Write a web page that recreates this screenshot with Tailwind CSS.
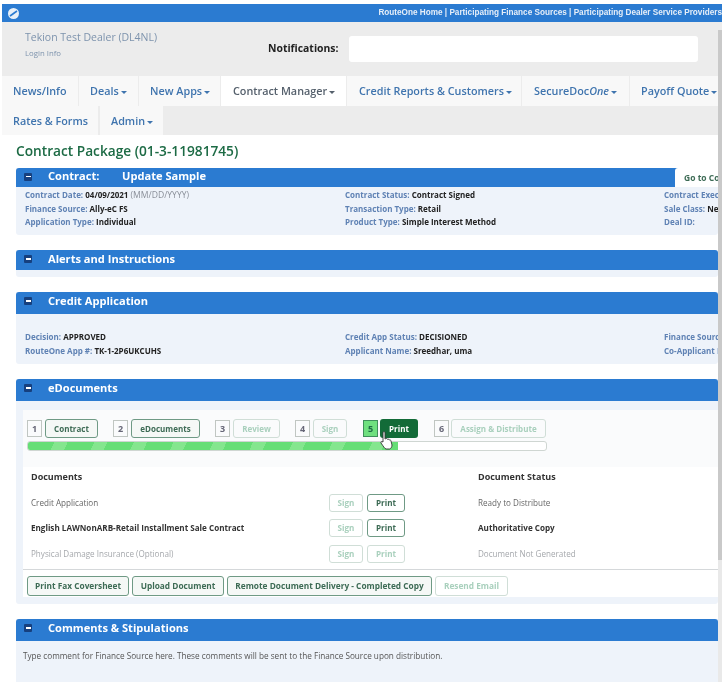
<!DOCTYPE html>
<html lang="en">
<head>
    <meta charset="UTF-8">
    <meta name="viewport" content="width=device-width, initial-scale=1.0">
    <title>RouteOne | Contract Package</title>
    <script src="https://cdn.jsdelivr.net/npm/@tailwindcss/browser@4"></script>
</head>
<body class="bg-white">
<div class="relative w-[722px] h-[682px] overflow-hidden bg-white pt-[4px] pl-[2px] font-['Open_Sans',sans-serif] text-[#333] blur-[0.35px]">

    <!-- top bar -->
    <div class="flex items-center justify-between h-[18px] bg-[#2b7bd1] pl-[6px] w-[720px]">
        <svg class="w-[11px] h-[11px]" viewBox="0 0 11 11"><circle cx="5.5" cy="5.5" r="5.5" fill="#e8f0f8"/><path d="M2 8 L9 3" stroke="#2b7bd1" stroke-width="1.6"/></svg>
        <div class="font-['Liberation_Sans',sans-serif] font-bold text-[8.2px] text-[#e6eef8] whitespace-nowrap">RouteOne Home | Participating Finance Sources | Participating Dealer Service Providers</div>
    </div>

    <!-- dealer header -->
    <div class="bg-[#ececec] h-[113px] w-[720px]">
        <div class="flex h-[54px] pt-[14px]">
            <div class="w-[266px] pl-[23px]">
                <div class="text-[10.5px] leading-[12px] text-[#7d93ad] -mt-[5px]">Tekion Test Dealer (DL4NL)</div>
                <div class="text-[7.8px] leading-[10px] mt-[5px] text-[#7d93ad]">Login Info</div>
            </div>
            <div class="w-[81px] pt-[2px] text-[10.4px] font-bold text-[#222] leading-[20px]">Notifications:</div>
            <div class="w-[349px] h-[26px] bg-white rounded-[3px]"></div>
        </div>
        <div class="flex items-start gap-[1px] text-[10.8px] font-semibold text-[#3f74ae] whitespace-nowrap">
            <div class="w-[76px] h-[30px] bg-[#f8f8f8] pl-[11px] leading-[30px]">News/Info</div>
            <div class="w-[59px] h-[30px] bg-[#f8f8f8] pl-[11px] leading-[30px]">Deals<span class="inline-block align-middle ml-[2px] w-0 h-0 border-x-[3px] border-t-[3px] border-x-transparent border-t-current"></span></div>
            <div class="w-[81px] h-[30px] bg-[#f8f8f8] pl-[11px] leading-[30px]">New Apps<span class="inline-block align-middle ml-[2px] w-0 h-0 border-x-[3px] border-t-[3px] border-x-transparent border-t-current"></span></div>
            <div class="w-[125px] h-[30px] bg-white pl-[12px] leading-[30px] text-[#55606c]">Contract Manager<span class="inline-block align-middle ml-[2px] w-0 h-0 border-x-[3px] border-t-[3px] border-x-transparent border-t-current"></span></div>
            <div class="w-[174px] h-[30px] bg-[#f8f8f8] pl-[12px] leading-[30px]">Credit Reports &amp; Customers<span class="inline-block align-middle ml-[2px] w-0 h-0 border-x-[3px] border-t-[3px] border-x-transparent border-t-current"></span></div>
            <div class="w-[107px] h-[30px] bg-[#f8f8f8] pl-[12px] leading-[30px]">SecureDoc<em>One</em><span class="inline-block align-middle ml-[2px] w-0 h-0 border-x-[3px] border-t-[3px] border-x-transparent border-t-current"></span></div>
            <div class="w-[90px] h-[30px] bg-[#f8f8f8] pl-[11px] leading-[30px]">Payoff Quote<span class="inline-block align-middle ml-[2px] w-0 h-0 border-x-[3px] border-t-[3px] border-x-transparent border-t-current"></span></div>
        </div>
        <div class="flex items-start gap-[2px] text-[10.8px] font-semibold text-[#3f74ae] whitespace-nowrap">
            <div class="w-[96px] h-[29px] bg-[#f8f8f8] pl-[11px] leading-[29px]">Rates &amp; Forms</div>
            <div class="w-[63px] h-[29px] bg-[#f8f8f8] pl-[11px] leading-[29px]">Admin<span class="inline-block align-middle ml-[2px] w-0 h-0 border-x-[3px] border-t-[3px] border-x-transparent border-t-current"></span></div>
        </div>
    </div>

    <div class="pl-[14px] w-[716px]">
        <h1 class="pt-[6px] h-[33px] text-[13.7px] leading-[19px] font-semibold text-[#1d6b45]">Contract Package (01-3-11981745)</h1>

        <!-- contract -->
        <section class="h-[67px] bg-[#eef3fa] rounded-b-[3px]">
            <div class="flex items-center h-[19px] pb-[2px] bg-[#2b7bd1] rounded-t-[3px] pl-[8px] text-white text-[11.1px] font-bold relative">
                <span class="flex items-center justify-center w-[8px] h-[8px] bg-[#16407f] rounded-[1px] mr-[16px]"><span class="w-[5px] h-[1.5px] bg-white"></span></span>
                <span class="w-[74px]">Contract:</span><span>Update Sample</span>
                <span class="absolute right-0 top-0 w-[43px] h-[19px] bg-white rounded-tl-[3px] pl-[9px] text-[8.5px] leading-[20px] text-[#3d6b55] whitespace-nowrap overflow-hidden">Go to Contract</span>
            </div>
            <div class="grid grid-cols-[320px_319px_1fr] pl-[9px] pt-[1px] text-[8px] leading-[13.5px] font-bold text-[#222] whitespace-nowrap overflow-hidden">
                <div><span class="text-[#5f82b4]">Contract Date:</span> 04/09/2021 <span class="font-normal text-[8.6px] leading-[0] text-[#8a8f99]">(MM/DD/YYYY)</span></div>
                <div><span class="text-[#5f82b4]">Contract Status:</span> Contract Signed</div>
                <div class="overflow-hidden"><span class="text-[#5f82b4]">Contract Exec</span></div>
                <div><span class="text-[#5f82b4]">Finance Source:</span> Ally-eC FS</div>
                <div><span class="text-[#5f82b4]">Transaction Type:</span> Retail</div>
                <div class="overflow-hidden"><span class="text-[#5f82b4]">Sale Class:</span> New</div>
                <div><span class="text-[#5f82b4]">Application Type:</span> Individual</div>
                <div><span class="text-[#5f82b4]">Product Type:</span> Simple Interest Method</div>
                <div><span class="text-[#5f82b4]">Deal ID:</span></div>
            </div>
        </section>

        <!-- alerts -->
        <section class="mt-[15px] h-[27px] bg-[#eef3fa] rounded-b-[3px]">
            <div class="flex items-center h-[20px] pb-[2px] bg-[#2b7bd1] rounded-t-[3px] pl-[8px] text-white text-[11.1px] font-bold">
                <span class="flex items-center justify-center w-[8px] h-[8px] bg-[#16407f] rounded-[1px] mr-[16px]"><span class="w-[5px] h-[1.5px] bg-white"></span></span>
                <span>Alerts and Instructions</span>
            </div>
        </section>

        <!-- credit application -->
        <section class="mt-[15px] h-[72px] bg-[#eef3fa] rounded-b-[3px]">
            <div class="flex items-center h-[22px] pb-[4px] bg-[#2b7bd1] rounded-t-[3px] pl-[8px] text-white text-[11.1px] font-bold">
                <span class="flex items-center justify-center w-[8px] h-[8px] bg-[#16407f] rounded-[1px] mr-[16px]"><span class="w-[5px] h-[1.5px] bg-white"></span></span>
                <span>Credit Application</span>
            </div>
            <div class="grid grid-cols-[320px_319px_1fr] pl-[9px] pt-[16px] text-[8px] leading-[13.5px] font-bold text-[#222] whitespace-nowrap">
                <div><span class="text-[#5f82b4]">Decision:</span> APPROVED</div>
                <div><span class="text-[#5f82b4]">Credit App Status:</span> DECISIONED</div>
                <div class="overflow-hidden"><span class="text-[#5f82b4]">Finance Source</span></div>
                <div><span class="text-[#5f82b4]">RouteOne App #:</span> TK-1-2P6UKCUHS</div>
                <div><span class="text-[#5f82b4]">Applicant Name:</span> Sreedhar, uma</div>
                <div class="overflow-hidden"><span class="text-[#5f82b4]">Co-Applicant Name</span></div>
            </div>
        </section>

        <!-- edocuments -->
        <section class="mt-[15px] h-[225px] bg-[#eef3fa] rounded-b-[3px]">
            <div class="flex items-center h-[22px] pb-[4px] bg-[#2b7bd1] rounded-t-[3px] pl-[8px] text-white text-[11.1px] font-bold">
                <span class="flex items-center justify-center w-[8px] h-[8px] bg-[#16407f] rounded-[1px] mr-[16px]"><span class="w-[5px] h-[1.5px] bg-white"></span></span>
                <span>eDocuments</span>
            </div>
            <div class="ml-[7px] mt-[9px] bg-white h-[187px]">
                <div class="h-[57px] bg-[#fafbfc] pl-[4px] pt-[9px]">
                    <div class="flex items-center text-[8px] font-bold whitespace-nowrap h-[19px]">
                        <span class="flex items-center justify-center w-[15px] h-[17px] border border-[#c0c6c2] text-[9px] text-[#667]">1</span>
                        <span class="flex items-center justify-center ml-[3px] w-[53px] h-[19px] border border-[#6f9a85] bg-[#f5f8f6] rounded-[3px] text-[#3d6b55]">Contract</span>
                        <span class="flex items-center justify-center ml-[15px] w-[15px] h-[17px] border border-[#c0c6c2] text-[9px] text-[#667]">2</span>
                        <span class="flex items-center justify-center ml-[3px] w-[69px] h-[19px] border border-[#6f9a85] bg-[#f5f8f6] rounded-[3px] text-[#3d6b55]">eDocuments</span>
                        <span class="flex items-center justify-center ml-[15px] w-[15px] h-[17px] border border-[#c0c6c2] text-[9px] text-[#667]">3</span>
                        <span class="flex items-center justify-center ml-[3px] w-[47px] h-[19px] border border-[#d0ded7] rounded-[3px] text-[#a9d0bd]">Review</span>
                        <span class="flex items-center justify-center ml-[15px] w-[15px] h-[17px] border border-[#c0c6c2] text-[9px] text-[#667]">4</span>
                        <span class="flex items-center justify-center ml-[3px] w-[34px] h-[19px] border border-[#d0ded7] rounded-[3px] text-[#a9d0bd]">Sign</span>
                        <span class="flex items-center justify-center ml-[16px] w-[15px] h-[17px] border border-[#3f8f5c] bg-[#6fe07f] text-[9px] text-[#1d6b45]">5</span>
                        <span class="flex items-center justify-center ml-[2px] w-[38px] h-[19px] rounded-[3px] bg-[#136b38] text-white">Print</span>
                        <span class="flex items-center justify-center ml-[16px] w-[15px] h-[17px] border border-[#c0c6c2] text-[9px] text-[#667]">6</span>
                        <span class="flex items-center justify-center ml-[2px] w-[95px] h-[19px] border border-[#d0ded7] rounded-[3px] text-[#a9d0bd]">Assign &amp; Distribute</span>
                    </div>
                    <div class="mt-[3px] w-[520px] h-[10px] rounded-[3px] border border-[#cfd6d2] bg-white overflow-hidden">
                        <div class="h-full w-[370px] bg-[repeating-linear-gradient(115deg,#66de76_0,#66de76_24px,#84e68e_24px,#84e68e_36px)]"></div>
                    </div>
                </div>
                <div class="flex items-center h-[20px] text-[9px] font-bold text-[#333]">
                    <span class="w-[455px] pl-[8px]">Documents</span><span>Document Status</span>
                </div>
                <div class="mt-[2px] h-[81px] border-b border-[#d5d8da] text-[8.1px] pt-[1px]">
                    <div class="flex items-center h-[25.5px] text-[#666]">
                        <span class="w-[306px] pl-[8px]">Credit Application</span>
                        <span class="flex items-center justify-center w-[34px] h-[18px] border border-[#d0ded7] rounded-[3px] font-bold text-[#a9d0bd]">Sign</span>
                        <span class="flex items-center justify-center ml-[4px] w-[38px] h-[18px] border border-[#6f9a85] rounded-[3px] font-bold text-[#3d6b55]">Print</span>
                        <span class="ml-[73px]">Ready to Distribute</span>
                    </div>
                    <div class="flex items-center h-[25.5px] font-bold text-[#333]">
                        <span class="w-[306px] pl-[8px] whitespace-nowrap">English LAWNonARB-Retail Installment Sale Contract</span>
                        <span class="flex items-center justify-center w-[34px] h-[18px] border border-[#d0ded7] rounded-[3px] text-[#a9d0bd]">Sign</span>
                        <span class="flex items-center justify-center ml-[4px] w-[38px] h-[18px] border border-[#6f9a85] rounded-[3px] text-[#3d6b55]">Print</span>
                        <span class="ml-[73px]">Authoritative Copy</span>
                    </div>
                    <div class="flex items-center h-[25.5px] text-[#a5a8ac]">
                        <span class="w-[306px] pl-[8px]">Physical Damage Insurance (Optional)</span>
                        <span class="flex items-center justify-center w-[34px] h-[18px] border border-[#d0ded7] rounded-[3px] font-bold text-[#a9d0bd]">Sign</span>
                        <span class="flex items-center justify-center ml-[4px] w-[38px] h-[18px] border border-[#d0ded7] rounded-[3px] font-bold text-[#a9d0bd]">Print</span>
                        <span class="ml-[73px]">Document Not Generated</span>
                    </div>
                </div>
                <div class="flex items-center gap-[3px] pl-[4px] pt-[6px] text-[8.3px] font-bold whitespace-nowrap">
                    <span class="flex items-center justify-center w-[102px] h-[20px] border border-[#6f9a85] bg-[#f5f8f6] rounded-[3px] text-[#3d6b55]">Print Fax Coversheet</span>
                    <span class="flex items-center justify-center w-[92px] h-[20px] border border-[#6f9a85] bg-[#f5f8f6] rounded-[3px] text-[#3d6b55]">Upload Document</span>
                    <span class="flex items-center justify-center w-[205px] h-[20px] border border-[#6f9a85] bg-[#f5f8f6] rounded-[3px] text-[#3d6b55]">Remote Document Delivery - Completed Copy</span>
                    <span class="flex items-center justify-center w-[73px] h-[20px] border border-[#d0ded7] rounded-[3px] text-[#a9d0bd]">Resend Email</span>
                </div>
            </div>
        </section>

        <!-- comments -->
        <section class="mt-[15px] h-[70px] bg-[#eef3fa]">
            <div class="flex items-center h-[22px] pb-[4px] bg-[#2b7bd1] rounded-t-[3px] pl-[8px] text-white text-[11.1px] font-bold">
                <span class="flex items-center justify-center w-[8px] h-[8px] bg-[#16407f] rounded-[1px] mr-[16px]"><span class="w-[5px] h-[1.5px] bg-white"></span></span>
                <span>Comments &amp; Stipulations</span>
            </div>
            <div class="pl-[7px] pt-[9px] text-[8.2px] text-[#555] whitespace-nowrap">Type comment for Finance Source here. These comments will be sent to the Finance Source upon distribution.</div>
        </section>
    </div>

    <!-- scrollbar -->
    <div class="absolute right-0 top-[30px] bottom-0 w-[4px] bg-[#e9e9e9]"><div class="h-[530px] bg-[#c9c9c9]"></div></div>

    <!-- mouse pointer -->
    <svg class="absolute left-[380px] top-[431px] w-[13px] h-[19px]" viewBox="0 0 13 19">
        <path d="M3 1.5 C3 .5 5 .5 5 1.5 V8 L6 7.5 C7 7.2 7.6 8 7.6 8.4 C8.4 8 9.2 8.4 9.4 9 C10.2 8.8 11 9.2 11 10 L12 14 C12 16 11 17.5 9.5 18 H6 C4.5 17.5 3.5 15.5 1 12 C.5 11 1.5 10 3 11 Z" fill="#fff" stroke="#333" stroke-width=".9"/>
    </svg>
</div>
</body>
</html>
